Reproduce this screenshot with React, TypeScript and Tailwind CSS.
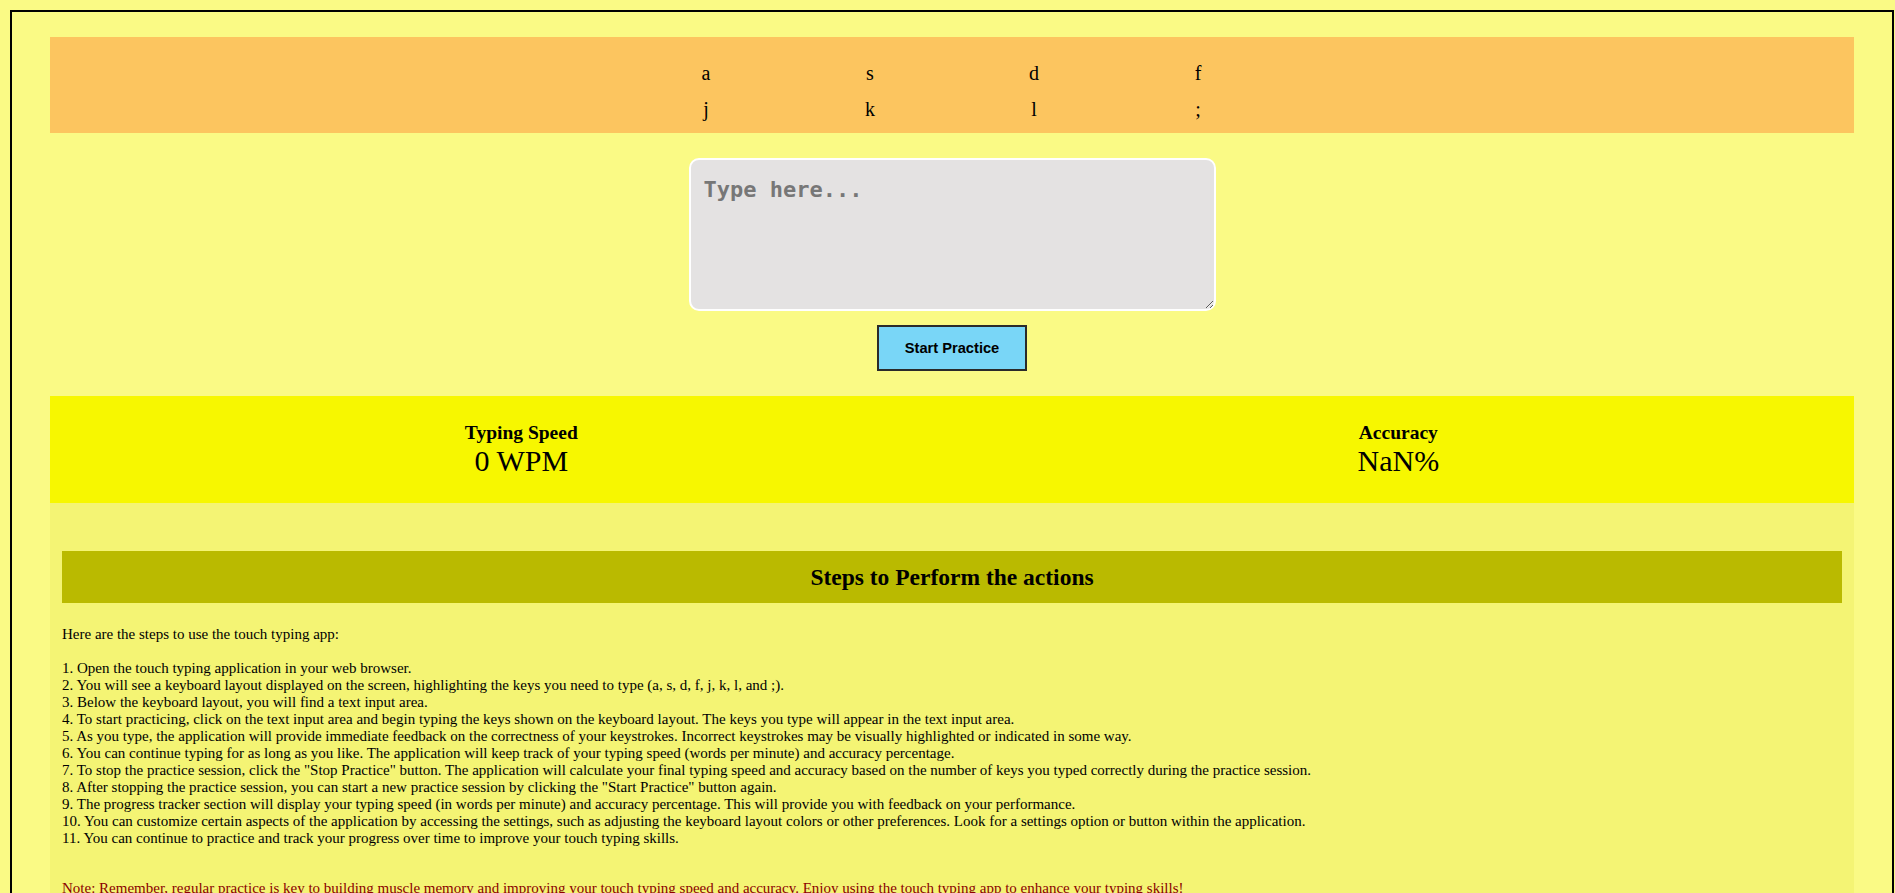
import { useState } from 'react'

const rowOne = ['a', 's', 'd', 'f']
const rowTwo = ['j', 'k', 'l', ';']

const steps = [
  '1. Open the touch typing application in your web browser.',
  '2. You will see a keyboard layout displayed on the screen, highlighting the keys you need to type (a, s, d, f, j, k, l, and ;).',
  '3. Below the keyboard layout, you will find a text input area.',
  '4. To start practicing, click on the text input area and begin typing the keys shown on the keyboard layout. The keys you type will appear in the text input area.',
  '5. As you type, the application will provide immediate feedback on the correctness of your keystrokes. Incorrect keystrokes may be visually highlighted or indicated in some way.',
  '6. You can continue typing for as long as you like. The application will keep track of your typing speed (words per minute) and accuracy percentage.',
  '7. To stop the practice session, click the "Stop Practice" button. The application will calculate your final typing speed and accuracy based on the number of keys you typed correctly during the practice session.',
  '8. After stopping the practice session, you can start a new practice session by clicking the "Start Practice" button again.',
  '9. The progress tracker section will display your typing speed (in words per minute) and accuracy percentage. This will provide you with feedback on your performance.',
  '10. You can customize certain aspects of the application by accessing the settings, such as adjusting the keyboard layout colors or other preferences. Look for a settings option or button within the application.',
  '11. You can continue to practice and track your progress over time to improve your touch typing skills.',
]

function KeyRow({ keys }: { keys: string[] }) {
  return (
    <div className="flex justify-center text-[20px] leading-[36px]">
      {keys.map((k) => (
        <div key={k} className="w-[164px] text-center">
          {k}
        </div>
      ))}
    </div>
  )
}

export default function App() {
  const [text, setText] = useState('')

  return (
    <div className="min-h-screen bg-[#fafa85] pt-[10px] text-black [font-family:'Liberation_Serif',serif]">
      <div className="ml-[10px] w-[1884px] border-2 border-black px-[38px] pt-[25px]">
        {/* keyboard */}
        <div className="bg-[#fcc55f] pt-[18px] pb-[6px]">
          <KeyRow keys={rowOne} />
          <KeyRow keys={rowTwo} />
        </div>

        {/* typing area */}
        <div className="flex flex-col items-center pt-[25px] pb-[25px]">
          <textarea
            value={text}
            onChange={(e) => setText(e.target.value)}
            placeholder="Type here..."
            className="h-[153px] w-[527px] rounded-[10px] border-2 border-white bg-[#e4e2e2] pt-[17px] pl-[13px] pr-[13px] text-[22px] leading-[26px] font-bold outline-none placeholder:text-[#777777] [font-family:'DejaVu_Sans_Mono',monospace]"
          />
          <button className="mt-[14px] h-[46px] w-[150px] border-2 border-[#2a2a2a] bg-[#79d6f7] text-[14.67px] font-bold [font-family:'Liberation_Sans',Arial,sans-serif]">
            Start Practice
          </button>
        </div>

        {/* progress */}
        <div className="flex justify-around bg-[#f7f700] px-[25px] pt-[26px] pb-[26px] text-center">
          <div>
            <div className="text-[19.5px] leading-[21.6px] font-bold">Typing Speed</div>
            <div className="text-[30px] leading-[33.2px]">0 WPM</div>
          </div>
          <div>
            <div className="text-[19.5px] leading-[21.6px] font-bold">Accuracy</div>
            <div className="text-[30px] leading-[33.2px]">NaN%</div>
          </div>
        </div>

        {/* instructions */}
        <div className="bg-[#f4f474] px-[12px] pt-[48px] pb-[40px]">
          <h2 className="bg-[#baba00] py-[13px] text-center text-[23.5px] leading-[26px] font-bold">
            Steps to Perform the actions
          </h2>
          <div className="mt-[23.5px] text-[15px] leading-[17px]">
            <div>Here are the steps to use the touch typing app:</div>
            <div className="h-[17px]" />
            {steps.map((s) => (
              <div key={s}>{s}</div>
            ))}
          </div>
          <p className="mt-[33px] text-[15px] leading-[17px] text-[#8b0000]">
            Note: Remember, regular practice is key to building muscle memory and improving your touch typing speed and accuracy. Enjoy using the touch typing app to enhance your typing skills!
          </p>
        </div>
      </div>
    </div>
  )
}
